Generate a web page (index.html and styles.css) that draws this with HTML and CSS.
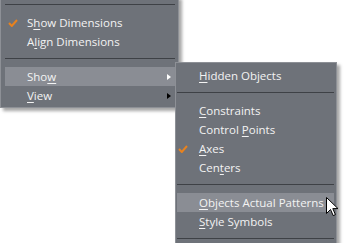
FILE: index.html
```html
<!DOCTYPE html>
<html>
<head>
<meta charset="utf-8">
<link rel="stylesheet" href="styles.css">
</head>
<body>
<div class="menu main">
  <div class="sep"></div>
  <div class="item"><span class="check"><svg width="10" height="8" viewBox="0 0 10 8"><path d="M1 4 L3.8 7 L9 1" fill="none" stroke="#e8821e" stroke-width="2"/></svg></span><span class="label">S<u>h</u>ow Dimensions</span></div>
  <div class="item"><span class="check"></span><span class="label">A<u>l</u>ign Dimensions</span></div>
  <div class="sep"></div>
  <div class="item hl"><span class="check"></span><span class="label">Sho<u>w</u></span><span class="arrow white"></span></div>
  <div class="item"><span class="check"></span><span class="label"><u>V</u>iew</span><span class="arrow"></span></div>
</div>
<div class="menu sub">
  <div class="item"><span class="check"></span><span class="label"><u>H</u>idden Objects</span></div>
  <div class="sep"></div>
  <div class="item"><span class="check"></span><span class="label"><u>C</u>onstraints</span></div>
  <div class="item"><span class="check"></span><span class="label">Control <u>P</u>oints</span></div>
  <div class="item"><span class="check"><svg width="10" height="8" viewBox="0 0 10 8"><path d="M1 4 L3.8 7 L9 1" fill="none" stroke="#e8821e" stroke-width="2"/></svg></span><span class="label"><u>A</u>xes</span></div>
  <div class="item"><span class="check"></span><span class="label">Cen<u>t</u>ers</span></div>
  <div class="sep"></div>
  <div class="item hl"><span class="check"></span><span class="label"><u>O</u>bjects Actual Patterns</span></div>
  <div class="item"><span class="check"></span><span class="label"><u>S</u>tyle Symbols</span></div>
  <div class="sep"></div>
</div>
<svg class="cursor" width="13" height="20" viewBox="0 0 13 20"><path d="M0.5 0.5 L0.5 16.5 L4.5 12.5 L7.2 18.6 L9.4 17.6 L6.8 11.6 L12 11.6 Z" fill="#fff" stroke="#000" stroke-width="1" stroke-linejoin="miter"/></svg>
</body>
</html>
```
FILE: styles.css
```css
html, body {
  margin: 0;
  padding: 0;
  background: #ffffff;
  width: 346px;
  height: 243px;
  overflow: hidden;
  position: relative;
  font-family: "Open Sans", "Noto Sans", sans-serif;
  font-size: 11.5px;
  color: #f3f3f3;
}
.menu {
  position: absolute;
  background: #6e7279;
  border: 1px solid #8d9096;
  box-shadow: 3px 3px 3px rgba(0, 0, 0, 0.35);
  box-sizing: border-box;
}
.main {
  left: 0;
  top: -4px;
  width: 179px;
  padding: 0 3px 2px 4px;
}
.sub {
  left: 175px;
  top: 62px;
  width: 162px;
  padding: 3px 2px 0 1px;
}
.item {
  height: 19px;
  display: flex;
  align-items: center;
}
.item.hl {
  background: #8a8d94;
}
.check {
  width: 22px;
  flex: none;
  display: flex;
  align-items: center;
  padding-left: 3px;
  box-sizing: border-box;
  height: 19px;
}
.sub .check {
  padding-left: 1px;
}
.label {
  flex: 1;
  white-space: nowrap;
  line-height: 19px;
}
.label u {
  text-decoration-thickness: 1px;
  text-underline-offset: 2px;
}
.arrow {
  width: 0;
  height: 0;
  border-top: 3.5px solid transparent;
  border-bottom: 3.5px solid transparent;
  border-left: 4px solid #000;
  margin-right: 4px;
}
.arrow.white {
  border-left-color: #ffffff;
}
.sep {
  height: 16px;
  position: relative;
}
.sep::after {
  content: "";
  position: absolute;
  left: 0;
  right: 0;
  top: 7px;
  height: 1px;
  background: #3e4146;
}
.cursor {
  position: absolute;
  left: 326px;
  top: 197px;
}
```
